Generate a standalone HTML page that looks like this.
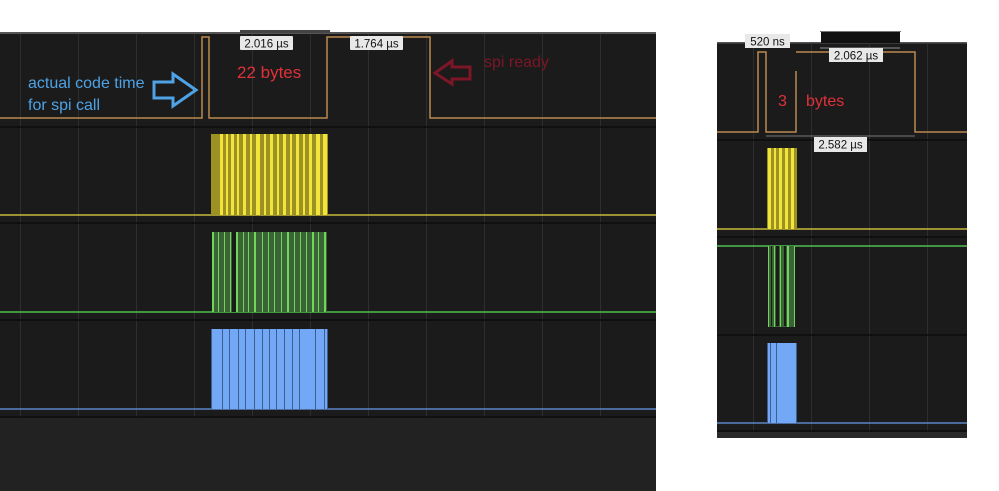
<!DOCTYPE html>
<html><head><meta charset="utf-8"><style>
html,body{margin:0;padding:0;background:#fff;width:999px;height:491px;overflow:hidden}
svg{display:block}
text{font-family:"Liberation Sans",sans-serif}
</style></head><body>
<svg width="999" height="491" viewBox="0 0 999 491" xmlns="http://www.w3.org/2000/svg">
<rect x="0" y="33" width="656" height="458" fill="#1b1b1b"/>
<rect x="0" y="418" width="656" height="73" fill="#222"/>
<rect x="0" y="32" width="656" height="2" fill="#555"/>
<g stroke="#2e2e2e" stroke-width="1">
<line x1="20.5" y1="34" x2="20.5" y2="418"/><line x1="78.5" y1="34" x2="78.5" y2="418"/>
<line x1="136.5" y1="34" x2="136.5" y2="418"/><line x1="194.5" y1="34" x2="194.5" y2="418"/>
<line x1="252.5" y1="34" x2="252.5" y2="418"/><line x1="310.5" y1="34" x2="310.5" y2="418"/>
<line x1="368.5" y1="34" x2="368.5" y2="418"/><line x1="426.5" y1="34" x2="426.5" y2="418"/>
<line x1="484.5" y1="34" x2="484.5" y2="418"/><line x1="542.5" y1="34" x2="542.5" y2="418"/>
<line x1="600.5" y1="34" x2="600.5" y2="418"/>
</g>
<g stroke="#0c0c0c" stroke-width="1.5">
<line x1="0" y1="127" x2="656" y2="127"/><line x1="0" y1="223" x2="656" y2="223"/>
<line x1="0" y1="320" x2="656" y2="320"/><line x1="0" y1="417" x2="656" y2="417"/>
</g>
<rect x="240" y="30" width="90" height="3" fill="#444"/>
<polyline points="0,118 202,118 202,37 209,37 209,118 327,118 327,37 430,37 430,118 656,118" fill="none" stroke="#b9894f" stroke-width="1.5"/>
<line x1="0" y1="215" x2="656" y2="215" stroke="#c8b93a" stroke-width="1.5"/>
<rect x="211" y="134" width="117" height="81" fill="#9c9224"/>
<g fill="#f2e43a">
<rect x="220" y="134" width="3" height="81"/><rect x="226" y="134" width="2" height="81"/><rect x="231" y="134" width="3" height="81"/>
<rect x="237" y="134" width="2" height="81"/><rect x="243" y="134" width="3" height="81"/><rect x="250" y="134" width="2" height="81"/>
<rect x="256" y="134" width="4" height="81"/><rect x="264" y="134" width="2" height="81"/><rect x="270" y="134" width="3" height="81"/>
<rect x="277" y="134" width="2" height="81"/><rect x="283" y="134" width="3" height="81"/><rect x="290" y="134" width="2" height="81"/>
<rect x="296" y="134" width="3" height="81"/><rect x="303" y="134" width="2" height="81"/><rect x="309" y="134" width="3" height="81"/>
<rect x="316" y="134" width="4" height="81"/><rect x="323" y="134" width="4" height="81"/>
</g>
<line x1="0" y1="312" x2="656" y2="312" stroke="#4fbf4f" stroke-width="1.5"/>
<rect x="212" y="232" width="115" height="80" fill="#3a6336"/>
<g fill="#6fd65a">
<rect x="212" y="232" width="2" height="80"/><rect x="218" y="232" width="1" height="80"/><rect x="224" y="232" width="1" height="80"/>
<rect x="230" y="232" width="1" height="80"/><rect x="236" y="232" width="2" height="80"/><rect x="243" y="232" width="1" height="80"/>
<rect x="248" y="232" width="1" height="80"/><rect x="254" y="232" width="2" height="80"/><rect x="262" y="232" width="1" height="80"/>
<rect x="268" y="232" width="1" height="80"/><rect x="274" y="232" width="1" height="80"/><rect x="281" y="232" width="1" height="80"/>
<rect x="287" y="232" width="2" height="80"/><rect x="294" y="232" width="1" height="80"/><rect x="300" y="232" width="1" height="80"/>
<rect x="306" y="232" width="1" height="80"/><rect x="312" y="232" width="2" height="80"/><rect x="318" y="232" width="1" height="80"/>
<rect x="324" y="232" width="2" height="80"/>
</g>
<rect x="232" y="232" width="4" height="80" fill="#1b1b1b"/>
<line x1="0" y1="409" x2="656" y2="409" stroke="#5a86c8" stroke-width="1.5"/>
<rect x="211" y="329" width="117" height="80" fill="#72a8f5"/>
<g fill="#3d5f91">
<rect x="211" y="329" width="1" height="80"/><rect x="222" y="329" width="1" height="80"/><rect x="229" y="329" width="1" height="80"/>
<rect x="238" y="329" width="1" height="80"/><rect x="245" y="329" width="1" height="80"/><rect x="254" y="329" width="1" height="80"/>
<rect x="262" y="329" width="1" height="80"/><rect x="269" y="329" width="1" height="80"/><rect x="276" y="329" width="1" height="80"/>
<rect x="284" y="329" width="1" height="80"/><rect x="292" y="329" width="1" height="80"/><rect x="299" y="329" width="1" height="80"/>
<rect x="315" y="329" width="1" height="80"/><rect x="324" y="329" width="1" height="80"/><rect x="327" y="329" width="1" height="80"/>
</g>
<rect x="240" y="36" width="53" height="14" rx="1" fill="#e8e8e8"/>
<text x="266.5" y="47.5" font-size="11.5" fill="#111" text-anchor="middle">2.016 µs</text>
<rect x="350" y="36" width="53" height="14" rx="1" fill="#e8e8e8"/>
<text x="376.5" y="47.5" font-size="11.5" fill="#111" text-anchor="middle">1.764 µs</text>
<text x="237" y="78" font-size="17" fill="#e0313a">22 bytes</text>
<text x="28" y="88" font-size="16" fill="#4ea3e6">actual code time</text>
<text x="28" y="110" font-size="16" fill="#4ea3e6">for spi call</text>
<polygon points="154,82 173,82 173,74 196,90 173,106 173,98 154,98" fill="none" stroke="#4ea3e6" stroke-width="3"/>
<text x="484" y="67" font-size="16" fill="#7d1626">spi ready</text>
<polygon points="470,67 452,67 452,61 435,73 452,84 452,79 470,79" fill="none" stroke="#7d1626" stroke-width="3"/>

<rect x="717" y="43" width="250" height="395" fill="#1b1b1b"/>
<rect x="717" y="432" width="250" height="6" fill="#2a2a2a"/>
<rect x="717" y="42" width="250" height="1.5" fill="#555"/>
<rect x="821" y="32" width="79" height="11" fill="#111"/>
<rect x="820" y="31" width="81" height="1" fill="#777"/>
<g stroke="#2e2e2e" stroke-width="1">
<line x1="753.5" y1="43" x2="753.5" y2="432"/><line x1="811.5" y1="43" x2="811.5" y2="432"/>
<line x1="869.5" y1="43" x2="869.5" y2="432"/><line x1="927.5" y1="43" x2="927.5" y2="432"/>
</g>
<g stroke="#0c0c0c" stroke-width="1.5">
<line x1="717" y1="140" x2="967" y2="140"/><line x1="717" y1="237" x2="967" y2="237"/>
<line x1="717" y1="335" x2="967" y2="335"/><line x1="717" y1="431" x2="967" y2="431"/>
</g>
<polyline points="717,132 758,132 758,52 766,52 766,132 796,132 796,71" fill="none" stroke="#b9894f" stroke-width="1.5"/>
<polyline points="796,52 915,52 915,132 967,132" fill="none" stroke="#b9894f" stroke-width="1.5"/>
<line x1="766" y1="136" x2="915" y2="136" stroke="#777" stroke-width="1"/>
<rect x="820" y="47" width="80" height="2" fill="#555"/>
<rect x="745" y="34" width="45" height="14" fill="#e8e8e8"/>
<text x="767.5" y="45.5" font-size="11.5" fill="#111" text-anchor="middle">520 ns</text>
<rect x="829" y="48" width="54" height="14" fill="#e8e8e8"/>
<text x="856" y="59.5" font-size="11.5" fill="#111" text-anchor="middle">2.062 µs</text>
<rect x="814" y="137" width="53" height="15" fill="#e8e8e8"/>
<text x="840.5" y="148.5" font-size="11.5" fill="#111" text-anchor="middle">2.582 µs</text>
<text x="778" y="106" font-size="16" fill="#e0313a">3</text>
<text x="806" y="106" font-size="16" fill="#e0313a">bytes</text>
<line x1="717" y1="229" x2="967" y2="229" stroke="#c8b93a" stroke-width="1.5"/>
<rect x="767" y="148" width="30" height="81" fill="#9c9224"/>
<g fill="#f2e43a"><rect x="768" y="148" width="3" height="81"/><rect x="774" y="148" width="2" height="81"/><rect x="779" y="148" width="3" height="81"/><rect x="785" y="148" width="3" height="81"/><rect x="791" y="148" width="3" height="81"/></g>
<line x1="717" y1="246" x2="967" y2="246" stroke="#4fbf4f" stroke-width="1.5"/>
<rect x="768" y="246" width="27" height="81" fill="#3a6336"/>
<g fill="#1b1b1b"><rect x="771" y="246" width="1" height="80"/><rect x="776" y="246" width="3" height="80"/><rect x="784" y="246" width="2" height="80"/></g>
<g fill="#6fd65a"><rect x="768" y="246" width="1" height="81"/><rect x="774" y="246" width="1" height="81"/><rect x="780" y="246" width="1" height="81"/><rect x="787" y="246" width="2" height="81"/><rect x="794" y="246" width="1" height="81"/></g>
<line x1="717" y1="423" x2="967" y2="423" stroke="#5a86c8" stroke-width="1.5"/>
<rect x="767" y="343" width="30" height="80" fill="#72a8f5"/>
<g fill="#3d5f91"><rect x="767" y="343" width="1" height="80"/><rect x="770" y="343" width="1" height="80"/><rect x="776" y="343" width="1" height="80"/><rect x="796" y="343" width="1" height="80"/></g>
</svg>
</body></html>
